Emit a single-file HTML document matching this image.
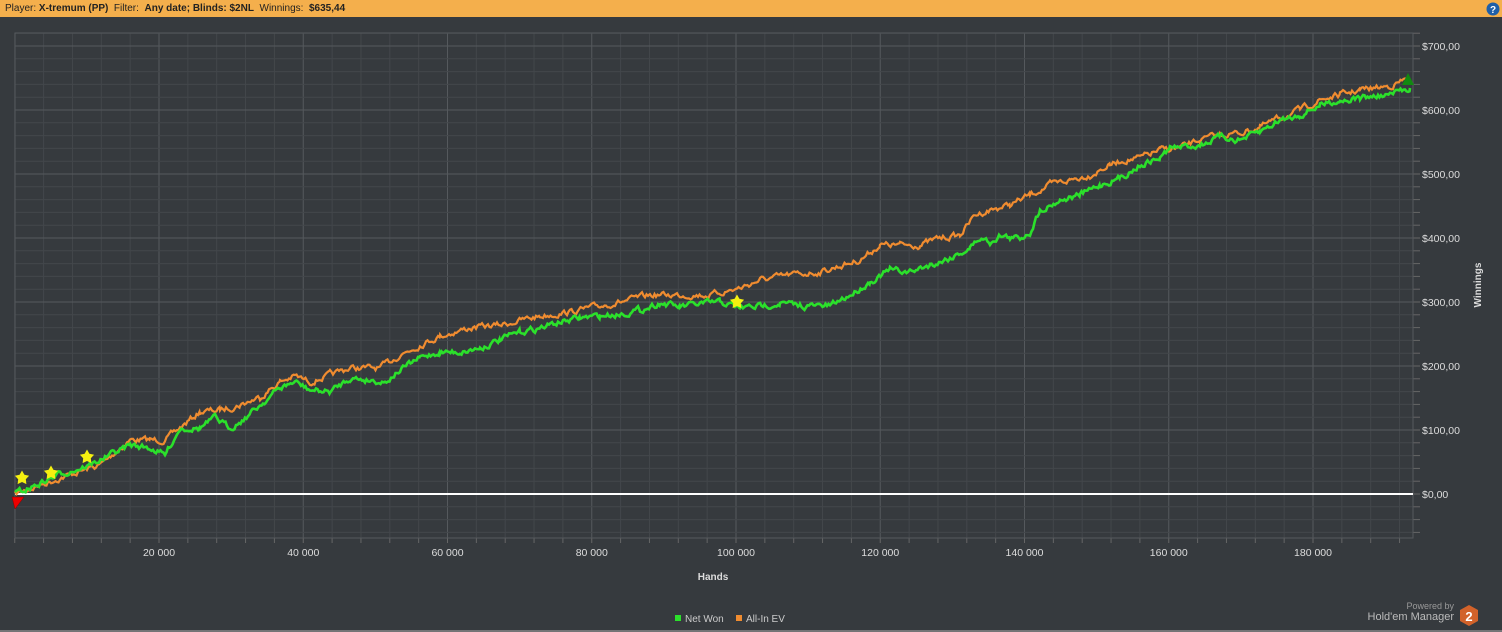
<!DOCTYPE html>
<html><head><meta charset="utf-8"><style>
body{margin:0;width:1502px;height:632px;background:#363a3e;font-family:"Liberation Sans",sans-serif;overflow:hidden;position:relative}
#hdr{position:absolute;left:0;top:0;width:1502px;height:17px;background:#f4af4c;font-size:10px;line-height:17px;color:#222}
#hdr span{margin-left:5px}
</style></head><body>
<div id="hdr"><span>Player: <b>X-tremum (PP)</b>&nbsp; Filter:&nbsp; <b>Any date; Blinds: $2NL</b>&nbsp; Winnings:&nbsp; <b>$635,44</b></span></div>
<svg style="position:absolute;left:1486px;top:2px" width="14" height="14"><circle cx="7" cy="7" r="6.5" fill="#1f5fa8"/><text x="7" y="11" font-size="10" font-weight="bold" fill="#fff" text-anchor="middle" font-family="Liberation Sans">?</text></svg>
<svg id="c" width="1502" height="632" style="position:absolute;left:0;top:0">
<g id="grid"></g>
<line x1="15" y1="494" x2="1413" y2="494" stroke="#fff" stroke-width="2"/>
<polyline id="o" fill="none" stroke="#f08c30" stroke-width="2.2"/>
<polyline id="g" fill="none" stroke="#2be02b" stroke-width="2.6"/>
<g font-family="Liberation Sans" font-size="10.5" fill="#ddd" id="lbl"></g>
<text x="1481" y="285" font-size="10" font-weight="bold" fill="#ddd" transform="rotate(-90 1481 285)" text-anchor="middle" font-family="Liberation Sans">Winnings</text>
<text x="713" y="580" font-size="10" font-weight="bold" fill="#ddd" text-anchor="middle" font-family="Liberation Sans">Hands</text>
<rect x="675" y="615" width="6" height="6" fill="#2be02b"/><text x="685" y="622" font-size="10" fill="#ccc" font-family="Liberation Sans">Net Won</text>
<rect x="736" y="615" width="6" height="6" fill="#f08c30"/><text x="746" y="622" font-size="10" fill="#ccc" font-family="Liberation Sans">All-In EV</text>
<polygon points="12,497 24,497 15,509" fill="#e00" stroke="#800" stroke-width="0.5"/>
<polygon points="1408,73 1414,85 1402,85" fill="#118a11"/>
<text x="1454" y="609" font-size="9" fill="#999" text-anchor="end" font-family="Liberation Sans">Powered by</text>
<text x="1454" y="620" font-size="11" fill="#bbb" text-anchor="end" font-family="Liberation Sans">Hold'em Manager</text>
<polygon points="1469,605 1478,610 1478,621 1469,626 1460,621 1460,610" fill="#d2622a"/>
<text x="1469" y="621" font-size="13" font-weight="bold" fill="#fff" text-anchor="middle" font-family="Liberation Sans">2</text>
<line x1="0" y1="631" x2="1502" y2="631" stroke="#888" stroke-width="1.5"/>
<g id="stars"></g>
</svg>
<script>
var NS="http://www.w3.org/2000/svg";
function el(p,t,a){var e=document.createElementNS(NS,t);for(var k in a)e.setAttribute(k,a[k]);p.appendChild(e);return e;}
var gr=document.getElementById('grid'),lb=document.getElementById('lbl');
var x0=14.75,xs=144.25/20000,y0=494,ys=0.64;
for(var h=0;h<=194000;h+=4000){var x=x0+h*xs;if(x>1413)break;var maj=h%20000==0&&h>0;
el(gr,'line',{x1:x,y1:33,x2:x,y2:538,stroke:maj?'#55595d':'#43474b','stroke-width':1});
el(gr,'line',{x1:x,y1:538,x2:x,y2:543,stroke:'#666'});
if(maj){var t=el(lb,'text',{x:x,y:556,'text-anchor':'middle'});t.textContent=(h/1000)+' 000';}}
for(var v=-60;v<=740;v+=20){var y=y0-v*ys;if(y<33||y>538)continue;var maj=v%100==0;
el(gr,'line',{x1:15,y1:y,x2:1413,y2:y,stroke:maj?'#55595d':'#43474b'});
el(gr,'line',{x1:1413,y1:y,x2:1420,y2:y,stroke:'#666'});
if(maj&&v>=0){var t=el(lb,'text',{x:1422,y:y+4});t.textContent='$'+v+',00';}}
el(gr,'rect',{x:15,y:33,width:1398,height:505,fill:'none',stroke:'#55595d'});
var s=7;function r(){s=(s*16807)%2147483647;return s/2147483647-0.5;}
function path(k,id,amp){var pts=[],w=0;for(var i=0;i<k.length-1;i++){var a=k[i],b=k[i+1];for(var x=a[0];x<b[0];x+=1.5){var t=(x-a[0])/(b[0]-a[0]);w=w*0.6+r()*amp;pts.push(x+','+(a[1]+(b[1]-a[1])*t+w).toFixed(1));}}
pts.push(k[k.length-1].join(','));document.getElementById(id).setAttribute('points',pts.join(' '));}
var G=[[15,494],[30,488],[60,474],[90,465],[120,450],[130,445],[150,448],[165,455],[180,428],[200,428],[215,418],[230,428],[245,418],[260,405],[280,388],[295,382],[310,390],[330,392],[350,378],[370,380],[385,382],[400,370],[420,358],[440,352],[460,352],[480,348],[500,340],[520,332],[540,328],[560,322],[580,318],[600,316],[620,314],[640,310],[660,303],[680,307],[700,304],[720,302],[740,308],[760,306],[780,303],[800,306],[830,306],[850,295],[870,282],[890,270],[910,272],[930,265],[950,258],[970,248],[980,238],[990,242],[1000,235],[1010,238],[1020,238],[1030,232],[1040,210],[1060,200],[1080,195],[1100,185],[1120,178],[1140,165],[1160,158],[1170,148],[1200,145],[1220,137],[1240,140],[1260,132],[1280,120],[1300,115],[1320,105],[1340,100],[1360,98],[1390,95],[1410,88]];
var O=[[15,494],[60,478],[100,465],[130,440],[150,440],[165,440],[180,428],[200,412],[220,410],[240,405],[260,397],[280,382],[295,376],[310,382],[330,375],[350,368],[380,368],[400,355],[420,345],[440,336],[470,328],[500,325],[540,316],[570,312],[600,306],[630,300],[650,295],[680,295],[710,295],[740,288],[760,280],[790,275],[820,272],[840,266],[860,260],[880,245],[900,245],[920,245],[940,238],[960,235],[975,215],[990,210],[1010,205],[1030,195],[1050,185],[1070,180],[1090,175],[1110,165],[1125,160],[1140,158],[1160,150],[1180,148],[1200,140],[1220,135],[1240,133],[1260,127],[1280,118],[1300,110],[1320,100],[1340,95],[1360,90],[1390,86],[1410,78]];
path(O,'o',5);path(G,'g',5);
var st=document.getElementById('stars');
[[22,478],[51,473],[87,457],[737,302]].forEach(function(p){var d='';for(var i=0;i<10;i++){var a=Math.PI/5*i+Math.PI;var rr=i%2?4:7.5;d+=(p[0]+rr*Math.sin(a)).toFixed(1)+','+(p[1]+rr*Math.cos(a)).toFixed(1)+' ';}el(st,'polygon',{points:d,fill:'#f5f010'});});
</script>
</body></html>
